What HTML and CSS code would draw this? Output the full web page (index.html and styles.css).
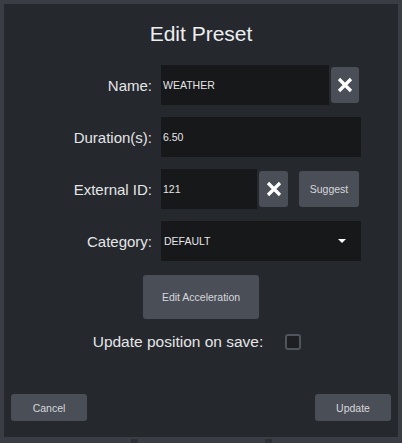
FILE: index.html
```html
<!DOCTYPE html>
<html>
<head>
<meta charset="utf-8">
<link rel="stylesheet" href="styles.css">
</head>
<body>
<div class="screen">
  <div class="dialog">
    <h1 class="title">Edit Preset</h1>
    <div class="form">
      <label class="label">Name:</label>
      <div class="field">
        <div class="input name">WEATHER</div>
        <button class="btn icon-btn" aria-label="Clear">
          <svg viewBox="0 0 16 16" width="16" height="16"><path d="M2 2 L14 14 M14 2 L2 14" stroke="#fff" stroke-width="3.2" fill="none"/></svg>
        </button>
      </div>
      <label class="label">Duration(s):</label>
      <div class="field">
        <div class="input grow">6.50</div>
      </div>
      <label class="label">External ID:</label>
      <div class="field">
        <div class="input ext">121</div>
        <button class="btn icon-btn wide" aria-label="Clear">
          <svg viewBox="0 0 16 16" width="16" height="16"><path d="M2 2 L14 14 M14 2 L2 14" stroke="#fff" stroke-width="3.2" fill="none"/></svg>
        </button>
        <button class="btn suggest">Suggest</button>
      </div>
      <label class="label">Category:</label>
      <div class="field">
        <div class="input grow select">DEFAULT<span class="caret"></span></div>
      </div>
    </div>
    <button class="btn accel">Edit Acceleration</button>
    <div class="save-row">
      <span class="save-label">Update position on save:</span>
      <span class="checkbox"></span>
    </div>
    <div class="footer">
      <button class="btn foot">Cancel</button>
      <button class="btn foot">Update</button>
    </div>
  </div>
</div>
</body>
</html>
```
FILE: styles.css
```css
* { box-sizing: border-box; }
html, body { margin: 0; padding: 0; background: #3a3d43; }
body { font-family: "Liberation Sans", Arial, sans-serif; }

.screen {
  width: 402px;
  height: 443px;
  padding: 4px 4px 6px 4px;
  background:
    linear-gradient(to right, transparent 131px, #2c2f34 131px, #2c2f34 138px, transparent 138px, transparent 265px, #2c2f34 265px, #2c2f34 272px, transparent 272px) bottom / 100% 4px no-repeat,
    #3a3d43;
}

.dialog {
  height: 100%;
  background: #25282c;
  display: flex;
  flex-direction: column;
  padding-top: 18px;
}

.title {
  margin: 0;
  font-weight: normal;
  font-size: 21px;
  line-height: 24px;
  color: #eceef0;
  text-align: center;
}

.form {
  margin-top: 19px;
  display: grid;
  grid-template-columns: 148px 200px;
  column-gap: 9px;
  row-gap: 12px;
}

.label {
  font-size: 15px;
  color: #e4e6e8;
  text-align: right;
  align-self: center;
}

.field {
  height: 40px;
  display: flex;
  align-items: center;
}

.input {
  height: 40px;
  background: #17181a;
  color: #e6e6e6;
  font-size: 10.5px;
  display: flex;
  align-items: center;
  padding-left: 2px;
}
.grow { flex: 1; }
.name { width: 168px; }
.ext { width: 96px; }
.select { padding-left: 3px; position: relative; }
.caret {
  position: absolute;
  right: 15px;
  top: 18px;
  width: 0;
  height: 0;
  border-left: 4px solid transparent;
  border-right: 4px solid transparent;
  border-top: 4px solid #ffffff;
}

.btn {
  border: none;
  background: #4a4e57;
  color: #d6d8db;
  font-family: "Liberation Sans", Arial, sans-serif;
  font-size: 10.5px;
  border-radius: 3px;
  padding: 0;
  cursor: pointer;
}

.icon-btn {
  width: 28px;
  height: 36px;
  margin-left: 2px;
  display: flex;
  align-items: center;
  justify-content: center;
}
.icon-btn svg { display: block; }
.icon-btn.wide { width: 29px; }

.suggest {
  width: 60px;
  height: 36px;
  margin-left: 11px;
}

.accel {
  align-self: center;
  width: 116px;
  height: 44px;
  margin-top: 14px;
}

.save-row {
  margin-top: 13px;
  height: 20px;
  display: flex;
  align-items: center;
  justify-content: center;
  gap: 22px;
  padding-right: 8px;
}
.save-label {
  font-size: 15.5px;
  color: #e4e6e8;
}
.checkbox {
  width: 16px;
  height: 16px;
  border: 2px solid #50545b;
  border-radius: 3px;
  background: #1d1f22;
}

.footer {
  margin-top: auto;
  padding: 0 7px 16px 7px;
  display: flex;
  justify-content: space-between;
}
.foot {
  width: 76px;
  height: 27px;
}
```
